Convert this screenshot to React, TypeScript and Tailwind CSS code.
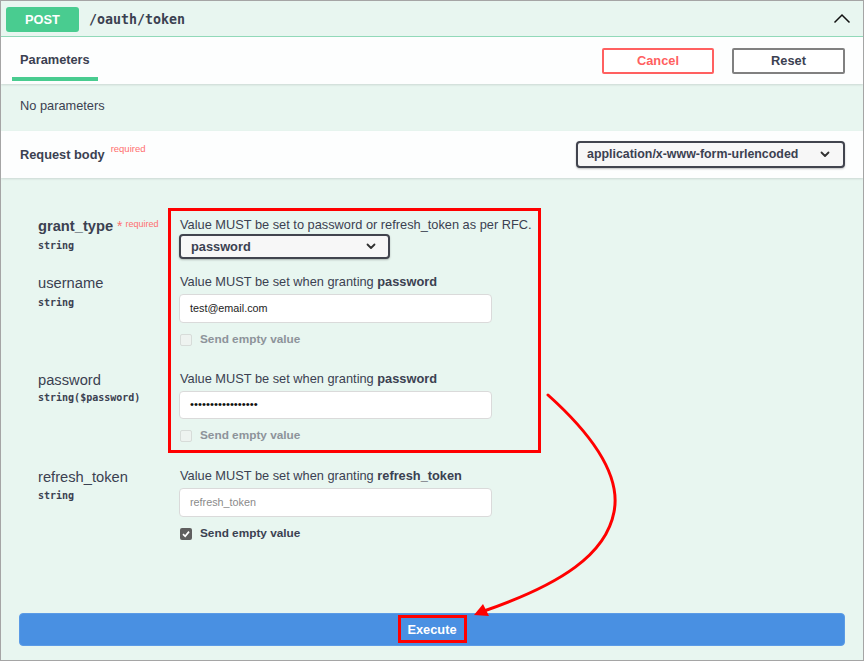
import React from "react";

const Chevron = ({ className = "" }: { className?: string }) => (
  <svg width="10" height="7" viewBox="0 0 10 7" className={className}>
    <polyline points="1.5,1.5 5,5 8.5,1.5" fill="none" stroke="#303030" strokeWidth="1.8" strokeLinecap="round" strokeLinejoin="round" />
  </svg>
);

const Check = ({ checked, disabled }: { checked?: boolean; disabled?: boolean }) => (
  <div className="flex items-center h-[12px]">
    {checked ? (
      <div className="w-[12px] h-[12px] rounded-[2px] bg-[#5f5f5f] flex items-center justify-center">
        <svg width="10" height="10" viewBox="0 0 10 10">
          <polyline points="2,5.2 4.2,7.3 8,2.6" fill="none" stroke="#fff" strokeWidth="1.7" />
        </svg>
      </div>
    ) : (
      <div className="w-[12px] h-[12px] rounded-[2px] border border-[#d7dcd9] bg-[#eef3f0]" />
    )}
    <span className={`ml-[8px] text-[11.8px] font-bold ${disabled ? "text-[#8d939a]" : "text-[#3b4151]"}`}>
      Send empty value
    </span>
  </div>
);

export default function App() {
  return (
    <div className="w-[864px] h-[661px] border border-[#a5a5a5] bg-[#e8f6f0] relative overflow-hidden flex flex-col font-['Liberation_Sans',Arial,sans-serif] text-[#3b4151]">
      {/* Header */}
      <div className="h-[36px] shrink-0 flex items-center border-b border-[#93dbbb] pl-[5px] pr-[12px] pt-[2px]">
        <div className="w-[73px] h-[25px] rounded-[3px] bg-[#49cc90] text-white font-bold text-[12.8px] flex items-center justify-center">
          POST
        </div>
        <span className="ml-[10px] font-['DejaVu_Sans_Mono',monospace] font-bold text-[13.3px] text-[#3b4151]">
          /oauth/token
        </span>
        <div className="flex-1" />
        <svg width="18" height="11" viewBox="0 0 18 11" className="-mt-[3px]">
          <polyline points="1.5,9.5 9,2 16.5,9.5" fill="none" stroke="#111" strokeWidth="1.5" />
        </svg>
      </div>

      {/* Tabs */}
      <div className="h-[47px] shrink-0 bg-[#fdfefe] flex items-start justify-between pr-[18px] shadow-[0_1px_2px_rgba(0,0,0,0.12)] relative z-10">
        <div className="ml-[11px] w-[86px] pt-[15px] flex flex-col">
          <span className="pl-[8px] leading-[16px] text-[12.8px] font-bold text-[#3b4151]">Parameters</span>
          <div className="mt-[9px] h-[4px] bg-[#49cc90]" />
        </div>
        <div className="flex items-center gap-[18px] h-full">
          <button className="w-[112px] h-[26px] rounded-[2px] border-2 border-[#ff6060] bg-white text-[#ff6060] font-bold text-[12.8px]">
            Cancel
          </button>
          <button className="w-[113px] h-[26px] rounded-[2px] border-2 border-[#808080] bg-white text-[#3b4151] font-bold text-[12.8px]">
            Reset
          </button>
        </div>
      </div>

      {/* No parameters */}
      <div className="h-[47px] shrink-0 flex items-center pl-[19px] pb-[3px] text-[12.8px]">No parameters</div>

      {/* Request body */}
      <div className="h-[47px] shrink-0 bg-[#fdfefe] flex items-center justify-between pl-[19px] pr-[18px] shadow-[0_1px_2px_rgba(0,0,0,0.12)] relative z-10">
        <div className="flex items-start">
          <span className="text-[12.8px] font-bold">Request body</span>
          <span className="ml-[6px] -mt-[3px] text-[9.5px] text-[#ff6f6f]">required</span>
        </div>
        <div className="w-[269px] h-[27px] rounded-[4px] border-2 border-[#41444e] bg-[#f7f7f7] shadow-[0_1px_2px_rgba(0,0,0,0.25)] flex items-center justify-between pl-[9px] pr-[13px]">
          <span className="text-[12.4px] font-bold text-[#3b4151]">application/x-www-form-urlencoded</span>
          <Chevron />
        </div>
      </div>

      {/* Params */}
      <div className="flex-1 flex flex-col pt-[39px]">
        {/* grant_type */}
        <div className="flex pl-[37px]">
          <div className="w-[141px]">
            <div className="flex items-start leading-[18px]">
              <span className="text-[14.7px] font-bold">grant_type</span>
              <span className="ml-[4px] text-[14px] text-[#ff6f6f] leading-[18px]">*</span>
              <span className="ml-[3px] text-[9px] text-[#ff6f6f] leading-[12px] mt-[1px]">required</span>
            </div>
            <div className="mt-[3px] font-['DejaVu_Sans_Mono',monospace] text-[10px] font-semibold text-[#3b4151]">string</div>
          </div>
          <div className="flex flex-col">
            <div className="pl-[1px] leading-[16px] text-[12.8px]">Value MUST be set to password or refresh_token as per RFC.</div>
            <div className="mt-[1px] w-[211px] h-[25px] rounded-[4px] border-2 border-[#41444e] bg-[#f7f7f7] shadow-[0_1px_2px_rgba(0,0,0,0.25)] flex items-center justify-between pl-[10px] pr-[12px]">
              <span className="text-[12.8px] font-bold">password</span>
              <Chevron />
            </div>
          </div>
        </div>

        {/* username */}
        <div className="flex pl-[37px] mt-[15px]">
          <div className="w-[141px]">
            <div className="leading-[18px] text-[14.7px]">username</div>
            <div className="mt-[3px] font-['DejaVu_Sans_Mono',monospace] text-[10px] font-semibold">string</div>
          </div>
          <div className="flex flex-col">
            <div className="pl-[1px] leading-[16px] text-[12.8px]">
              Value MUST be set when granting <b>password</b>
            </div>
            <div className="mt-[4px] w-[313px] h-[29px] rounded-[4px] border border-[#dadada] bg-white flex items-center pl-[10px] text-[10.8px] text-[#222]">
              test@email.com
            </div>
            <div className="mt-[11px] pl-[1px]">
              <Check disabled />
            </div>
          </div>
        </div>

        {/* password */}
        <div className="flex pl-[37px] mt-[25px]">
          <div className="w-[141px]">
            <div className="leading-[18px] text-[14.7px]">password</div>
            <div className="mt-[1px] font-['DejaVu_Sans_Mono',monospace] text-[10px] font-semibold">string($password)</div>
          </div>
          <div className="flex flex-col">
            <div className="pl-[1px] leading-[16px] text-[12.8px]">
              Value MUST be set when granting <b>password</b>
            </div>
            <div className="mt-[4px] w-[313px] h-[28px] rounded-[4px] border border-[#dadada] bg-white flex items-center pl-[10px] text-[11.4px] text-[#111]">
              •••••••••••••••••
            </div>
            <div className="mt-[11px] pl-[1px]">
              <Check disabled />
            </div>
          </div>
        </div>

        {/* refresh_token */}
        <div className="flex pl-[37px] mt-[26px]">
          <div className="w-[141px]">
            <div className="leading-[18px] text-[14.7px]">refresh_token</div>
            <div className="mt-[2px] font-['DejaVu_Sans_Mono',monospace] text-[10px] font-semibold">string</div>
          </div>
          <div className="flex flex-col">
            <div className="pl-[1px] leading-[16px] text-[12.8px]">
              Value MUST be set when granting <b>refresh_token</b>
            </div>
            <div className="mt-[4px] w-[313px] h-[29px] rounded-[4px] border border-[#dadada] bg-white flex items-center pl-[10px] text-[10.8px] text-[#8a8a8a]">
              refresh_token
            </div>
            <div className="mt-[11px] pl-[1px]">
              <Check checked />
            </div>
          </div>
        </div>

        <div className="flex-1" />
        <div className="mx-[18px] mb-[14px] h-[33px] rounded-[4px] bg-[#4990e2] border border-[#5b9be6] flex items-center justify-center text-white font-bold text-[12.8px]">
          Execute
        </div>
      </div>

      {/* Annotations */}
      <div className="absolute left-[167px] top-[207px] w-[373px] h-[245px] border-[3px] border-[#ff0000] pointer-events-none" />
      <div className="absolute left-[397px] top-[614px] w-[69px] h-[28px] border-[3px] border-[#ff0000] pointer-events-none" />
      <svg className="absolute left-0 top-0 pointer-events-none" width="864" height="661" viewBox="-1 -1 864 661">
        <path d="M546,393 C585,428 620,470 612,510 C604,552 560,582 482,609" fill="none" stroke="#ff0000" strokeWidth="3" strokeLinecap="round" />
        <polygon points="472,613 481,602 487,614" fill="#ff0000" />
      </svg>
    </div>
  );
}
